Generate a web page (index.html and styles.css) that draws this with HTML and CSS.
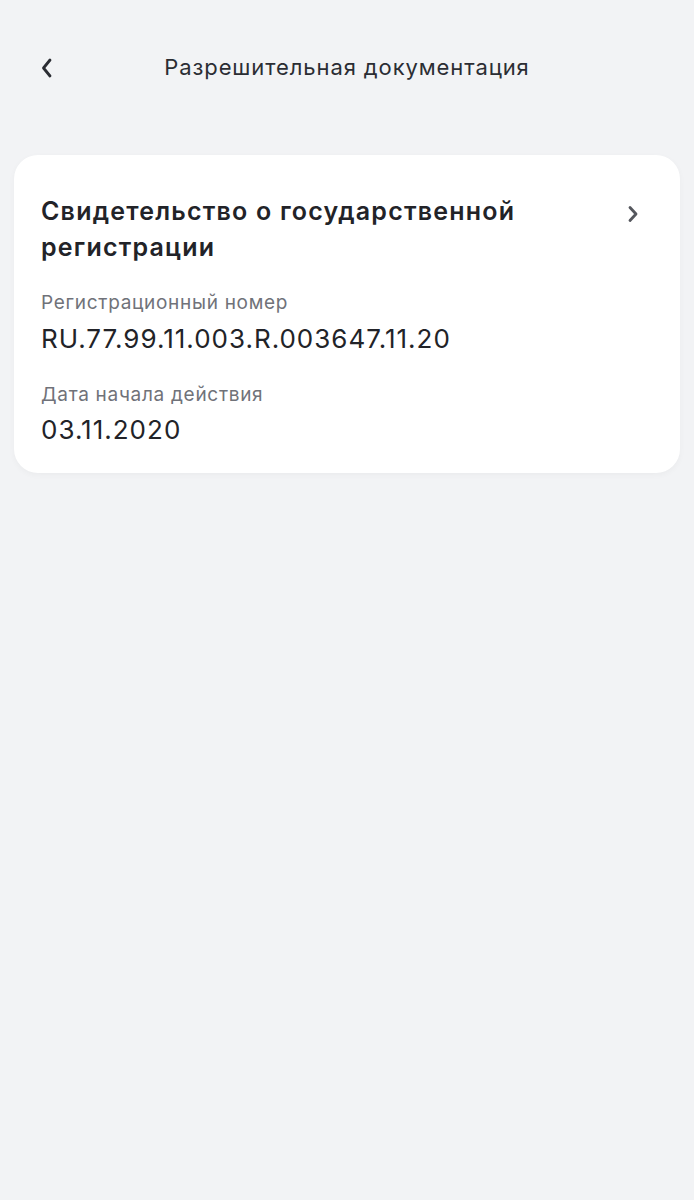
FILE: index.html
```html
<!DOCTYPE html>
<html lang="ru">
<head>
<meta charset="utf-8">
<link rel="stylesheet" href="styles.css">
</head>
<body>
<div class="screen">
  <header class="topbar">
    <button class="back" aria-label="Назад">
      <svg width="14" height="22" viewBox="0 0 14 22"><path d="M10 3 L3.5 11 L10 19" fill="none" stroke="#2b2d33" stroke-width="2.8" stroke-linecap="round" stroke-linejoin="round"/></svg>
    </button>
    <h1 class="title">Разрешительная документация</h1>
  </header>
  <section class="card">
    <div class="card-head">
      <h2 class="card-title">Свидетельство о государственной регистрации</h2>
      <svg class="chev" width="14" height="20" viewBox="0 0 14 20"><path d="M4 3.5 L10 10 L4 16.5" fill="none" stroke="#55575d" stroke-width="2.8" stroke-linecap="round" stroke-linejoin="round"/></svg>
    </div>
    <div class="field">
      <div class="label">Регистрационный номер</div>
      <div class="value">RU.77.99.11.003.R.003647.11.20</div>
    </div>
    <div class="field">
      <div class="label">Дата начала действия</div>
      <div class="value">03.11.2020</div>
    </div>
  </section>
</div>
</body>
</html>
```

FILE: styles.css
```css
html, body {
  margin: 0;
  padding: 0;
  background: #f2f3f5;
  font-family: Inter, "Noto Sans", sans-serif;
  color: #222328;
}
.screen {
  width: 694px;
  min-height: 1200px;
  box-sizing: border-box;
  padding: 0 14px;
}
.topbar {
  position: relative;
  height: 138px;
  display: flex;
  justify-content: center;
  box-sizing: border-box;
}
.back {
  position: absolute;
  left: 26px;
  top: 57px;
  border: 0;
  background: none;
  padding: 0;
  display: flex;
}
.title {
  margin: 0;
  font-size: 22px;
  font-weight: 400;
  color: #2b2d33;
  letter-spacing: 0.9px;
  padding-top: 54px;
}
.card {
  margin-top: 17px;
  background: #fff;
  border-radius: 24px;
  padding: 24px 27px 25px;
  box-shadow: 0 2px 6px rgba(0, 0, 0, 0.035);
}
.card-head {
  display: flex;
  justify-content: space-between;
  align-items: flex-start;
}
.card-title {
  margin: 14px 0 0;
  font-size: 25px;
  font-weight: 600;
  line-height: 36px;
  color: #222328;
  width: 520px;
  letter-spacing: 1.2px;
}
.chev {
  margin-top: 25px;
  margin-right: 13px;
}
.field {
  margin-top: 25px;
}
.field + .field {
  margin-top: 25px;
}
.label {
  font-size: 19px;
  line-height: 26px;
  color: #707279;
  letter-spacing: 0.7px;
}
.value {
  font-size: 26px;
  line-height: 36px;
  color: #222328;
  margin-top: 5px;
  letter-spacing: 1px;
}
.field + .field .value {
  margin-top: 4px;
}
```
